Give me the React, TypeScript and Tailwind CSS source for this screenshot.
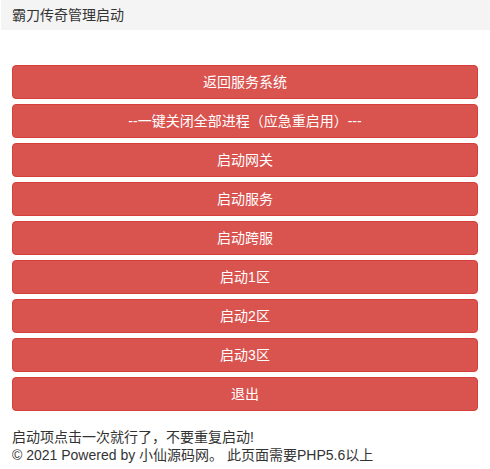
const buttons = [
  '返回服务系统',
  '--一键关闭全部进程（应急重启用）---',
  '启动网关',
  '启动服务',
  '启动跨服',
  '启动1区',
  '启动2区',
  '启动3区',
  '退出',
];

export default function App() {
  return (
    <div
      className="min-h-[469px] w-full bg-white text-[14px] text-[#333]"
      style={{ fontFamily: '"Liberation Sans", "Noto Sans CJK SC", sans-serif' }}
    >
      {/* Title bar */}
      <div className="ml-px flex h-[30px] items-center bg-[#f4f4f4] px-[11px] leading-[20px]">
        霸刀传奇管理启动
      </div>

      <div className="px-3 pt-[35px]">
        <div className="flex flex-col gap-[5px]">
          {buttons.map((label) => (
            <button
              key={label}
              className="flex h-[34px] w-full items-center justify-center rounded-[4px] border border-[#d43f3a] bg-[#d9534f] text-[14px] leading-[20px] text-white"
            >
              {label}
            </button>
          ))}
        </div>

        <div className="mt-[17px] leading-[18px]">
          <p>启动项点击一次就行了，不要重复启动!</p>
          <p>© 2021 Powered by 小仙源码网。 此页面需要PHP5.6以上</p>
        </div>
      </div>
    </div>
  );
}
